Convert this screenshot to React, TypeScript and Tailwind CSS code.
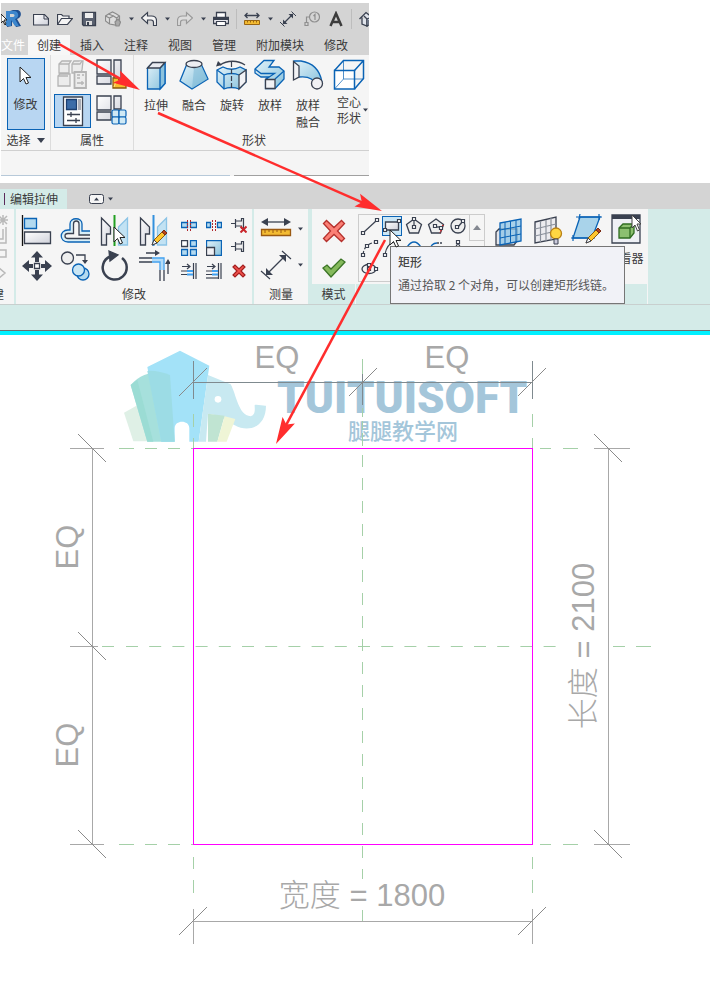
import { type FC, type ReactNode } from 'react'
import clsx from 'clsx'

const INK = '#3a4150'
const BLUE = '#0a63b5'
const GREY = '#a8a8a8'
const GREEN = '#a5d0a8'

type IconProps = { size?: number; width?: number; children: ReactNode }

const Icon: FC<IconProps> = ({ size = 32, width = size, children }) => (
  <svg
    width={width}
    height={size}
    viewBox={`0 0 ${width} ${size}`}
    fill="none"
    stroke={INK}
    strokeWidth="1.3"
    className="block shrink-0"
    aria-hidden="true"
  >
    {children}
  </svg>
)

const Gradients = () => (
  <svg width="0" height="0" className="absolute" aria-hidden="true">
    <defs>
      <linearGradient id="glass" x1="0" y1="0" x2="1" y2="1">
        <stop offset="0" stopColor="#e2f2f9" />
        <stop offset="1" stopColor="#86c1dc" />
      </linearGradient>
      <linearGradient id="steel" x1="0" y1="0" x2="1" y2="1">
        <stop offset="0" stopColor="#ffffff" />
        <stop offset="1" stopColor="#cfd1da" />
      </linearGradient>
    </defs>
  </svg>
)

const CursorShape: FC<{ x: number; y: number }> = ({ x, y }) => (
  <path
    transform={`translate(${x} ${y})`}
    d="M0 0v15l3.500-3.500 2.500 5.500 2.500-1-2.500-5.500h5z"
    fill="#fff"
    stroke="#222"
    strokeWidth="1"
  />
)

const Pencil: FC<{ x: number; y: number }> = ({ x, y }) => (
  <g transform={`translate(${x} ${y})`} strokeWidth="1">
    <path d="M0 15l2-5 8-8 3 3-8 8z" fill="#ffc62e" stroke="#8a5a10" />
    <path d="M10 2l2-2 3 3-2 2z" fill="#b5431d" stroke="#7a2c14" />
    <path d="M0 15l2-5 3 3z" fill="#fff" stroke={INK} />
  </g>
)

const Caret: FC<{ big?: boolean }> = ({ big }) => (
  <svg
    width={big ? 8 : 5}
    height={big ? 5 : 4}
    viewBox="0 0 8 5"
    className="block"
    aria-hidden="true"
  >
    <path d="M0 0h8L4 5z" fill={INK} />
  </svg>
)

/* Quick access toolbar */

const NewFile = () => (
  <Icon size={16}>
    <path d="M.5 3.500h11l4 4v6.500H.5z" fill="url(#steel)" stroke={INK} strokeWidth="1.200" />
    <path d="M11 3.500v4.500h4.500" strokeWidth="1" />
  </Icon>
)
const OpenFile = () => (
  <Icon size={16}>
    <path d="M.5 13.500v-10h4l1.500 1.500h6v2.500" strokeWidth="1.200" fill="#f4f4f4" />
    <path d="M.5 13.500l4-6h11l-5 6z" strokeWidth="1.200" fill="#f4f4f4" />
  </Icon>
)
const SaveFile = () => (
  <Icon size={16}>
    <path d="M1.500 1.500h13v13h-12l-1-1z" fill="#5a6170" />
    <path d="M4 2h8v5H4z" fill="#eee" stroke="none" />
    <path d="M5 10h6v4H5z" fill="#ddd" stroke="none" />
    <path d="M6 11h2v3H6z" fill={INK} stroke="none" />
  </Icon>
)
const SyncFile = () => (
  <Icon size={16}>
    <g stroke="#8b8b8b" strokeWidth="1.200">
      <path d="M.5 5l3-2 4-2 4 2 3 2v5l-4 4-6-1-4-3z" fill="#ddd" />
      <path d="M.5 5l4 2 4-2 3 2 3-2M4.500 7v6M3.500 3l5 2M11.500 7v5" />
      <path d="M10 11l3-3 2.500 3-1.500 4h-3z" fill="#aaa" />
    </g>
  </Icon>
)
const Undo: FC<{ muted?: boolean }> = ({ muted }) => (
  <Icon size={16}>
    <path
      d="M.5 7L6.500 1.500v3.500h4c3 0 5 2 5 4.500v5h-3V11.500c0-1.500-1-2.500-2.500-2.500H6.500v3.500z"
      transform={muted ? 'translate(16 0) scale(-1 1)' : undefined}
      fill={muted ? '#ddd' : '#f5f5f5'}
      stroke={muted ? '#999' : INK}
      strokeWidth="1.200"
    />
  </Icon>
)
const Print = () => (
  <Icon size={16}>
    <path d="M3.500 7V1.500h9V7" fill="#fff" />
    <path d="M.5 6.500h15v6H.5z" fill="#e8e8ee" />
    <path d="M3.500 10.500h9v4h-9z" fill="#fff" strokeWidth="1.200" />
    <path d="M1 8h14" strokeWidth="2" />
  </Icon>
)
const Ruler = () => (
  <Icon size={16}>
    <path d="M1 4.500h14M3.500 2L1 4.500 3.500 7M12.500 2L15 4.500 12.500 7" strokeWidth="1.300" />
    <path d="M.5 9.500h15v4H.5z" fill="#f3bb32" stroke="#9a6512" strokeWidth="1" />
    <path d="M3.500 10v1.500M6.500 10v1.500M9.500 10v1.500M12.500 10v1.500" stroke="#9a6512" strokeWidth="1" />
  </Icon>
)
const Aligned = () => (
  <Icon size={16}>
    <path d="M3 13L13 3" strokeWidth="1.200" />
    <path d="M3 8.500v4.500h4.500zM13 7.500V3H8.500z" fill={INK} stroke="none" />
    <path d="M0 11l4.500 4.500M11.500 .5L16 5" strokeWidth="1" />
  </Icon>
)
const Tag = () => (
  <Icon size={16}>
    <g stroke="#8f8f8f" strokeWidth="1.200">
      <circle cx="10.500" cy="6" r="5" />
      <path d="M5.500 6H2.500v6M1 11.500h3v3H1zM9.500 5l1.500-1.500V9" />
    </g>
  </Icon>
)
const TextNote = () => (
  <Icon size={16}>
    <path d="M2.500 15L8 2.500 13.500 15M4.500 11h7" stroke="#3c3c3c" strokeWidth="2.500" />
  </Icon>
)
const House = () => (
  <Icon size={16}>
    <path d="M.5 8L7 1.500 14 7M3 6.500V13l5 2V8L5 5" fill="#dfe3ea" />
    <path d="M8 8l5-2v6l-5 3zM10 9v4" fill="#b9c3d4" strokeWidth="1.200" />
  </Icon>
)

const QuickItem: FC<{ label: string; children: ReactNode }> = ({ label, children }) => (
  <button aria-label={label} className="flex w-6 shrink-0 justify-center">
    {children}
  </button>
)
const QuickCaret = () => (
  <button aria-label="更多" className="flex w-3 shrink-0 justify-center">
    <Caret />
  </button>
)
const QuickSeparator = () => (
  <span className="flex h-5 w-[7px] shrink-0 justify-center">
    <span className="w-px bg-[#bdbdbd]" />
  </span>
)

const QuickAccess = () => (
  <div className="flex h-8 items-center">
    <div className="w-7 shrink-0">
      <svg width="22" height="20" viewBox="0 0 22 20" className="block" aria-hidden="true">
        <path d="M6 3l6-2h5c4 1 4 8-1 9l4 7-5 1-4-7v6l-5 1z" fill="#1d4f91" />
        <path d="M5 2h8c5 0 6 7 1 8l4 7h-4l-4-6v6H5z" fill="#3d86cc" />
        <path d="M9 5h3c2 0 2 3 0 3H9z" fill="#d4d4d4" />
        <path d="M0 5v9l2-2 2 4 1-1-2-4h3z" fill="#fff" stroke="#222" strokeWidth="1" />
      </svg>
    </div>
    <QuickItem label="新建"><NewFile /></QuickItem>
    <QuickItem label="打开"><OpenFile /></QuickItem>
    <QuickItem label="保存"><SaveFile /></QuickItem>
    <QuickItem label="同步"><SyncFile /></QuickItem>
    <QuickCaret />
    <QuickItem label="放弃"><Undo /></QuickItem>
    <QuickCaret />
    <QuickItem label="重做"><Undo muted /></QuickItem>
    <QuickCaret />
    <QuickItem label="打印"><Print /></QuickItem>
    <QuickSeparator />
    <QuickItem label="测量"><Ruler /></QuickItem>
    <QuickCaret />
    <QuickItem label="对齐尺寸标注"><Aligned /></QuickItem>
    <QuickItem label="标记"><Tag /></QuickItem>
    <QuickItem label="文字"><TextNote /></QuickItem>
    <QuickSeparator />
    <QuickItem label="三维视图"><House /></QuickItem>
  </div>
)

/* Property panel icons */

const PasteGrey = () => (
  <Icon>
    <g stroke="#b4b4b4" fill="#ececec">
      <path d="M2 5l3-3h9l-2 3v9H2zM15 5l2-3h9l-1 9-2 3h-8zM1 17l2-2h10v12H1z" />
      <path d="M15 5h8l2-3M2 5h10M1 17h10" />
      <path d="M17.500 13h11.500v16H17.500z" strokeWidth="1.800" />
      <path d="M20 16h3M20 19h3M25 16h2M20 24h7M25 22v4" />
    </g>
  </Icon>
)
const FamilyTypes = () => (
  <Icon>
    <g fill="url(#steel)">
      <path d="M1 1h14v14H1zM18 1h7v21h-7zM1 17h14v8H1z" />
    </g>
    <path d="M17 29V19h5l1 2h7v8z" fill="#f7bd2d" stroke="#8a5a10" />
    <path d="M18 28l2-5h10" stroke="#ffe18a" strokeWidth="1" />
  </Icon>
)
const PropertySheet = () => (
  <Icon>
    <path d="M6.500 2h19v28.500h-19z" fill="#fff" />
    <path d="M9.500 4.500h10v10h-10z" fill="#3b6ca8" stroke="#1c3f70" />
    <path d="M21 4h3v11h-3z" fill="#a9adb7" stroke="none" />
    <path d="M10 19.500h13M10 25.500h13M14 17v5M19 23v5" />
  </Icon>
)
const FamilyCategory = () => (
  <Icon>
    <path d="M1 1h14v14H1zM18 1h7v13h-7zM1 17h14v8H1z" fill="url(#steel)" />
    <g fill="#cfe9f5" stroke={BLUE} strokeWidth="1.200">
      <rect x="16" y="15" width="7" height="7" rx="1.500" />
      <rect x="23" y="15" width="7" height="7" rx="1.500" />
      <rect x="16" y="22" width="7" height="7" rx="1.500" />
      <rect x="23" y="22" width="7" height="7" rx="1.500" />
    </g>
  </Icon>
)

/* Form icons */

const Extrusion = () => (
  <Icon>
    <path d="M7.500 9l5-5H25v20.500l-5 5.500H7.500z" fill="url(#glass)" stroke={BLUE} />
    <path d="M20 9l5-5v20.500l-5 5.500z" fill="#8cc2dd" stroke={BLUE} />
    <path d="M7.500 9l5-5.500H25L20 9z" fill="#e9ebf0" />
  </Icon>
)
const Blend = () => (
  <Icon>
    <path d="M8.500 6L2 22l12 8 16-10-6.500-14z" fill="url(#glass)" stroke={BLUE} />
    <path d="M16 9l-2 20.500L29.500 20 23 6z" fill="#78b5d4" stroke="none" opacity=".5" />
    <ellipse cx="16" cy="5" rx="8" ry="3.500" fill="#eceef2" />
  </Icon>
)
const Revolve = () => (
  <Icon>
    <path
      d="M1 11l6-3c5 3 12 3 17 0l6 3v12l-7 7c-4-2-11-2-15 0l-7-7z"
      fill="url(#glass)"
      stroke={BLUE}
    />
    <path d="M1 11l7 5v14" stroke={BLUE} />
    <path d="M8 16c4-2 11-2 15 0" stroke={BLUE} />
    <path d="M23 16l7-5v12l-7 7z" fill="#f1f2f5" />
    <path d="M4 6c7-5 18-5 25 0" />
    <path d="M0 7.500L2 2l4 4z" fill={INK} stroke="none" />
    <path d="M15.500 3v27" strokeWidth="1.200" strokeDasharray="5 2" />
  </Icon>
)
const Sweep = () => (
  <Icon>
    <path
      d="M1 10l9-8.500h10L15 8h10l5 4v8l-9 9.500h-9.500v-9l3-2.500H7l-6-4z"
      fill="url(#glass)"
      stroke={BLUE}
    />
    <path d="M1 10l6 4.500h13.500l-9 6M21 20l9-8" stroke={BLUE} />
    <path d="M11.500 20.500H21v9h-9.500z" fill="#f1f2f5" />
  </Icon>
)
const SweptBlend = () => (
  <Icon>
    <path d="M2 2h7c13 2 19 10 21 21l-6 3C22 20 16 17 7 18H2z" fill="url(#glass)" stroke={BLUE} />
    <path d="M1.500 2.500L7 7v11l-5.500 3z" fill="#f1f2f5" />
    <circle cx="25" cy="24.500" r="5.500" fill="#f1f1f4" />
  </Icon>
)
const VoidForms = () => (
  <Icon>
    <g stroke={BLUE} strokeWidth="1.500">
      <path d="M1.500 11.500h20V30h-20z" fill="#fff" />
      <path d="M1.500 11.500l9-10h20v18l-9 10.500M21.500 11.500l9-10" />
      <path d="M10.500 2v18h20M10.500 20l-9 10" strokeWidth="1" opacity=".7" />
    </g>
  </Icon>
)

const RibbonPanelLabel: FC<{ children: ReactNode }> = ({ children }) => (
  <div className="flex h-5 items-center justify-center">{children}</div>
)

const FormButton: FC<{ label: string[]; icon: ReactNode; wide?: boolean }> = ({
  label,
  icon,
  wide,
}) => (
  <button className={clsx('flex shrink-0 flex-col items-center', wide ? 'w-11' : 'w-[38px]')}>
    {icon}
    <span className={clsx('relative flex flex-col', wide ? 'pt-[3px] leading-4' : 'pt-[5px] leading-[17px]')}>
      {label.map((line) => (
        <span key={line}>{line}</span>
      ))}
      {wide && (
        <span className="absolute top-[17px] -right-[7px]">
          <Caret />
        </span>
      )}
    </span>
  </button>
)

const tabs = ['插入', '注释', '视图', '管理', '附加模块', '修改']

const FamilyRibbon = () => (
  <section className="mt-[3px] ml-px w-full max-w-[368px] overflow-hidden whitespace-nowrap">
    <div className="bg-[#d4d4d4]">
      <QuickAccess />
      <nav className="flex h-5 items-center">
        <a href="#" className="w-[27px] shrink-0 text-white">文件</a>
        <a href="#" className="flex h-full shrink-0 items-center bg-[#f7f7f7] px-[9px]">
          创建
        </a>
        {tabs.map((tab) => (
          <a key={tab} href="#" className="shrink-0 px-[10px]">
            {tab}
          </a>
        ))}
      </nav>
    </div>
    <div className="flex h-24 border-b border-[#d0d0d0] bg-[#f5f5f5]">
      <div className="flex w-[50px] shrink-0 flex-col items-center justify-between border-r border-[#dcdcdc] pt-[3px]">
        <button className="flex h-[72px] w-[38px] flex-col items-center border border-[#0a63b5] bg-[#b8d6f2] pt-1">
          <Icon>
            <CursorShape x={10} y={4} />
          </Icon>
          <span className="pt-[1px] leading-4">修改</span>
        </button>
        <button className="flex h-5 items-center gap-1.5">
          选择
          <Caret big />
        </button>
      </div>
      <div className="flex w-[83px] shrink-0 flex-col justify-between border-r border-[#dcdcdc] pt-1">
        <div className="grid grid-cols-2 gap-x-0.5 gap-y-[3px] px-[3px]">
          <button aria-label="粘贴" className="flex h-8 justify-center"><PasteGrey /></button>
          <button aria-label="族类型" className="flex h-8 justify-center"><FamilyTypes /></button>
          <button
            aria-label="属性选项板"
            className="flex h-[34px] items-center justify-center border border-[#0a63b5] bg-[#b8d6f2]"
          >
            <PropertySheet />
          </button>
          <button aria-label="族类别" className="flex h-[34px] items-center justify-center">
            <FamilyCategory />
          </button>
        </div>
        <RibbonPanelLabel>属性</RibbonPanelLabel>
      </div>
      <div className="flex grow flex-col justify-between pt-1 pl-[3px]">
        <div className="flex">
          <FormButton label={['拉伸']} icon={<Extrusion />} />
          <FormButton label={['融合']} icon={<Blend />} />
          <FormButton label={['旋转']} icon={<Revolve />} />
          <FormButton label={['放样']} icon={<Sweep />} />
          <FormButton label={['放样', '融合']} icon={<SweptBlend />} />
          <FormButton label={['空心', '形状']} icon={<VoidForms />} wide />
        </div>
        <RibbonPanelLabel>形状</RibbonPanelLabel>
      </div>
    </div>
    <div className="flex h-[25px] gap-1 bg-[#f5f5f5]">
      <div className="w-[229px] border-b border-[#b7c9d9]" />
      <div className="grow border-b border-[#a0a0a0]" />
    </div>
  </section>
)

/* Modify panel icons */

const Align = () => (
  <Icon>
    <path d="M1.500 0v31" stroke="#111" />
    <path d="M3.500 3.500h12v10h-12z" fill="#b3daf0" stroke={BLUE} />
    <path d="M3.500 17h26v11.500h-26z" fill="url(#steel)" />
  </Icon>
)
const Offset = () => (
  <Icon>
    <path d="M30 16h-8V9c0-7-12-7-12 0v6H8c-9 0-9 12 0 12h22" stroke={BLUE} fill="#d8eef7" />
    <path
      d="M30 20H19V9c0-4-5.500-4-5.500 0v9.500H8c-4 0-4 5 0 5h22"
      fill="#f5f5f5"
    />
  </Icon>
)
const MirrorPick = () => (
  <Icon>
    <path d="M2.500 3l9 9v7H7.500v11h-5z" fill="url(#steel)" />
    <path d="M28.500 3l-9 9v18h9z" fill="#c2e2f3" stroke="#8cc4e6" />
    <path d="M15.500 0v31" stroke="#22a022" strokeWidth="2" />
    <CursorShape x={15} y={12} />
  </Icon>
)
const MirrorDraw = () => (
  <Icon>
    <path d="M2.500 3l9 9v7H7.500v11h-5z" fill="url(#steel)" />
    <path d="M28.500 3l-9 9v18h9z" fill="#c2e2f3" stroke="#8cc4e6" />
    <path d="M15.500 0v31" stroke="#3390dd" strokeWidth="2" />
    <Pencil x={14} y={15} />
  </Icon>
)
const Move = () => (
  <Icon>
    <g fill={INK} stroke="none">
      <path d="M16 1l6 6.500h-4V12h-4V7.500h-4zM16 31l6-6.500h-4V20h-4v4.500h-4zM1 16l7-6v4h4v4H8v4zM31 16l-7-6v4h-4v4h4v4z" />
    </g>
    <path d="M13.500 13.500h5v5h-5z" fill="#fff" />
  </Icon>
)
const Copy = () => (
  <Icon>
    <circle cx="7.500" cy="8" r="6" fill="#eee" />
    <path d="M16 5h9v6" />
    <path d="M22 10h6l-3 4z" fill={INK} stroke="none" />
    <circle cx="23" cy="24" r="6" fill="#b3daf0" stroke={BLUE} />
    <circle cx="18.500" cy="20" r="6" fill="#c9e6f5" stroke={BLUE} />
  </Icon>
)
const Rotate = () => (
  <Icon>
    <path d="M11 6.500a12 12 0 1 0 12 1.500" strokeWidth="2.500" />
    <path d="M10 1l9 4-8 6z" fill={INK} />
  </Icon>
)
const TrimCorner = () => (
  <Icon>
    <path d="M1 8h13M1 12h13M22 20v11M26 20v11" />
    <path d="M14 10h10v10" stroke="#b4dcf8" strokeWidth="3" />
    <path d="M14 8h12v12M14 12h8v8" stroke="#3fa0f0" />
    <path d="M8 3h10M30 24V13" />
    <path d="M17 0l5 3-5 3zM27 14l3-5 3 5z" fill={INK} stroke="none" />
  </Icon>
)

const Split: FC<{ gap?: boolean }> = ({ gap }) => (
  <Icon size={16}>
    {gap ? (
      <path d="M.5 5.500h4v5h-4zM11.500 5.500h4v5h-4z" fill="#b3daf0" stroke={BLUE} />
    ) : (
      <path d="M.5 5.500h6v5h-6zM9.500 5.500h6v5h-6z" fill="#b3daf0" stroke={BLUE} />
    )}
    <path d="M6.500 3v11M9.500 3v11" stroke="#b0272d" strokeWidth="1" strokeDasharray="2 1" />
  </Icon>
)
const Pin: FC<{ unpin?: boolean }> = ({ unpin }) => (
  <Icon size={16}>
    <path d="M0 6.500h4.500M4.500 2v9M4.500 4h6V1.500h2v10h-2V9h-6" strokeWidth="1.200" fill="#eee" />
    {unpin && <path d="M9.500 9.500l6 6M15.500 9.500l-6 6" stroke="#c9252b" strokeWidth="2" />}
  </Icon>
)
const ArrayIcon = () => (
  <Icon size={16}>
    <path d="M.5 .5h6v6h-6z" fill="#fff" />
    <path d="M9.500 .5h6v6h-6zM.5 9.500h6v6h-6zM9.500 9.500h6v6h-6z" fill="#b3daf0" stroke={BLUE} />
  </Icon>
)
const Scale = () => (
  <Icon size={16}>
    <path d="M.5 .5h15v15H.5z" fill="url(#glass)" stroke={BLUE} />
    <path d="M.5 7.500h8v8h-8z" fill="#f1f1f4" />
  </Icon>
)
const Trim: FC<{ multi?: boolean }> = ({ multi }) => (
  <Icon size={16}>
    <path d="M12.500 0v16M15 0v16" strokeWidth="1.200" />
    <path d="M1 3.500h7M6 1l3 2.500L6 6" strokeWidth="1.200" />
    <path d="M0 8h6M0 11.500h6" strokeWidth="1.200" />
    <path d="M6 8h6M6 11.500h6" stroke="#3fa0f0" strokeWidth="1.800" />
    {multi && <path d="M0 15h12" strokeWidth="1.200" />}
  </Icon>
)
const Delete = () => (
  <Icon size={16}>
    <path
      d="M2 4l2-2 4 4 4-4 2 2-4 4 4 4-2 2-4-4-4 4-2-2 4-4z"
      fill="#f0524c"
      stroke="#a31f1f"
      strokeWidth="1.200"
    />
  </Icon>
)

const MeasureBetween = () => (
  <Icon>
    <path d="M4 9h24" />
    <path d="M1 9l7-4v8zM31 9l-7-4v8z" fill={INK} stroke="none" />
    <path d="M1.500 16.500h29v6h-29z" fill="#f3bb32" stroke="#9a5a12" />
    <path d="M5 17v3M9 17v2M13 17v3M17 17v2M21 17v3M25 17v2" stroke="#9a5a12" strokeWidth="1" />
  </Icon>
)
const MeasureAligned = () => (
  <Icon>
    <path d="M7 25L25 7" />
    <path d="M6 19v7h7zM26 13V6h-7z" fill={INK} stroke="none" />
    <path d="M1 22l9 8M22 2l9 8" strokeWidth="1.200" />
  </Icon>
)
const Cancel = () => (
  <Icon size={24}>
    <path
      d="M1.500 4.500l3-3 7.500 7 7.500-7 3 3-7 7.500 7 7.500-3 3-7.500-7-7.500 7-3-3 7-7.500z"
      fill="#fb8076"
      stroke="#b5302c"
    />
  </Icon>
)
const Finish = () => (
  <Icon size={24}>
    <path d="M1 13l4-3 4 4L19 4l4 3L9 22z" fill="#85b95c" stroke="#3c7526" />
  </Icon>
)

const IconButton: FC<{ label: string; children: ReactNode; caret?: boolean }> = ({
  label,
  children,
  caret,
}) => (
  <button aria-label={label} className="flex items-center justify-center gap-1.5">
    {children}
    {caret && <Caret />}
  </button>
)

/* Draw gallery icons, every cell is 20px */

const nodes = (points: [number, number][]) =>
  points.map(([x, y]) => (
    <path key={`${x}-${y}`} d={`M${x - 1.5} ${y - 1.5}h3v3h-3z`} fill="#fff" strokeWidth="1.200" />
  ))

const gallery: { label: string; icon: ReactNode; active?: boolean }[] = [
  { label: '线', icon: <><path d="M4 16L16 5" strokeWidth="1.200" />{nodes([[3, 17], [17, 4]])}</> },
  {
    label: '矩形',
    active: true,
    icon: <><path d="M3.500 6h13v8h-13z" fill="url(#steel)" />{nodes([[3, 14], [17, 5]])}</>,
  },
  {
    label: '内接多边形',
    icon: <><path d="M10 3l7.500 5.500-3 8.500h-9l-3-8.500z" fill="#eee" /><path d="M10 10V3" strokeWidth="1.200" />{nodes([[10, 11], [10, 3]])}</>,
  },
  {
    label: '外接多边形',
    icon: <><path d="M10 3l7.500 5.500-3 8.500h-9l-3-8.500z" fill="#eee" /><path d="M17 9l-3 8" stroke="#d22" strokeDasharray="3 1" /><path d="M11 11h4" />{nodes([[9, 10], [15, 12]])}</>,
  },
  {
    label: '圆形',
    icon: <><circle cx="10" cy="10" r="7" fill="#eee" /><path d="M10 11l5-6" />{nodes([[9, 11], [15, 5]])}</>,
  },
  {
    label: '起点-终点-半径弧',
    icon: <><path d="M3 17Q4 5 17 4" strokeDasharray="4 2" strokeWidth="1.200" />{nodes([[3, 17], [7, 8], [16, 4]])}</>,
  },
  { label: '圆心-端点弧', icon: <><path d="M3 16Q5 6 12 4" strokeWidth="1.200" />{nodes([[3, 17]])}</> },
  { label: '相切-端点弧', icon: <path d="M3 9Q10-1 17 9" stroke={BLUE} /> },
  { label: '圆角弧', icon: <><path d="M4 12Q5 5 11 5" stroke={BLUE} /><path d="M11 5h6" strokeDasharray="2 1" /></> },
  { label: '样条曲线', icon: <><path d="M6 12l4-7 4 7" strokeWidth="1.200" />{nodes([[10, 4]])}</> },
  { label: '椭圆', icon: <><ellipse cx="9" cy="9" rx="7" ry="4.500" />{nodes([[9, 9], [16, 9], [9, 5]])}</> },
]

const WorkPlane = () => (
  <Icon>
    <path d="M3 14l3-3h18v12l-3 4H3z" fill="#e3e5ea" />
    <path d="M7 5l21-4v22L7 27z" fill="#8ec5e6c0" stroke={BLUE} />
    <path d="M12 4v22M17.500 3v22M23 2v22M7 12l21-4M7 20l21-4" stroke={BLUE} strokeWidth="1" />
  </Icon>
)
const PlaneShow = () => (
  <Icon>
    <path d="M3 6l21-5v22L3 27z" fill="#ececf0" />
    <path d="M8.500 5v21M14 4v21M19 2v22M3 13l21-5M3 20l21-5" stroke="#8a909b" strokeWidth="1.200" />
    <circle cx="24" cy="17.500" r="5.500" fill="#ffd642" stroke="#b98015" />
    <path d="M22 23h4v5h-4z" fill="#ccd" strokeWidth="1" />
  </Icon>
)
const RefPlane = () => (
  <Icon>
    <path d="M9 3h20l-8 21H2z" fill="#a9d3ea" stroke={BLUE} />
    <path d="M5 3h26M0 24h24M9 0l-1 5M28 0v6M2 21v6" stroke={BLUE} strokeWidth="1.200" />
    <Pencil x={15} y={14} />
  </Icon>
)
const Viewer = () => (
  <Icon>
    <path d="M2 1h28v28H2z" fill="#eef0f5" />
    <path d="M2 3h28" strokeWidth="4" />
    <path d="M9 14l4-4h11v9l-4 5H9z" fill="#8cc070" stroke="#2f6c21" />
    <path d="M9 14h11v10M20 14l4-4" stroke="#2f6c21" />
    <g transform="translate(22 1)" stroke="#444" strokeWidth="1">
      <path d="M0 0v13l3-3 2.500 6 2-1L5 9h4z" fill="#fff" />
    </g>
  </Icon>
)

const DrawGallery = () => (
  <div className="relative flex h-[68px] w-[127px] shrink-0 overflow-hidden border border-[#cccccc]">
    <div className="grid grid-cols-5 content-start gap-x-0.5 gap-y-[2px] px-px pt-px">
      {gallery.map(({ label, icon, active }) => (
        <button
          key={label}
          aria-label={label}
          className={clsx(
            'h-5 w-5',
            active && 'bg-[#cbe6f5] outline -outline-offset-1 outline-[#0a63b5]',
          )}
        >
          <Icon size={20}>{icon}</Icon>
        </button>
      ))}
    </div>
    <button
      aria-label="向上滚动"
      className="flex h-[26px] grow items-center justify-center border-b border-l border-[#cccccc]"
    >
      <span className="rotate-180 opacity-60">
        <Caret big />
      </span>
    </button>
  </div>
)

const Tooltip = () => (
  <div
    role="tooltip"
    className="absolute top-[37px] left-[34px] h-[58px] w-[235px] border border-[#767676] bg-[#f1f2f7] pt-[7px] pl-[7px] text-[#575757]"
  >
    <p className="leading-4 font-medium text-[#444]">矩形</p>
    <p className="pt-[7px] leading-4">通过拾取 2 个对角，可以创建矩形线链。</p>
    <svg width="16" height="22" viewBox="0 0 16 22" className="absolute -top-[18px] -left-0.5" aria-hidden="true">
      <CursorShape x={1} y={1} />
    </svg>
  </div>
)

const EditRibbon = () => (
  <section className="mt-[7px] whitespace-nowrap">
    <div className="flex h-[26px] items-end bg-[#d4d4d4]">
      <a href="#" className="flex h-5 w-[67px] shrink-0 items-center gap-[5px] bg-[#d4ebe8] pl-1">
        <span className="h-3 w-px bg-[#5b2a5b]" />
        编辑拉伸
      </a>
      <button aria-label="最小化功能区" className="ml-[22px] flex h-5 items-center gap-1">
        <svg width="15" height="10" viewBox="0 0 15 10" aria-hidden="true">
          <rect x=".5" y=".5" width="14" height="9" rx="2" fill="#f5f5f5" stroke={INK} />
          <path d="M5 6.500L7.500 3.500 10 6.500z" fill={INK} />
        </svg>
        <Caret />
      </button>
    </div>
    <div className="flex h-24 border-b border-[#c8cfce] bg-[#d4ebe8]">
      <div className="flex w-3.5 shrink-0 flex-col justify-between overflow-hidden bg-[#f5f5f5]">
        <svg width="14" height="75" viewBox="0 0 14 75" fill="none" stroke="#b9b9b9" strokeWidth="1.500" aria-hidden="true">
          <path d="M3 6v10M-2 11H8M-1 7l8 8M7 7l-8 8M6 18v16H0M3 20v10H0M-2 41h8v7h-8M-2 58l7 6-7 6" />
        </svg>
        <span className="flex h-5 w-1 items-center justify-end">建</span>
      </div>
      <div className="ml-0.5 flex w-[236px] shrink-0 flex-col justify-between bg-[#f5f5f5]">
        <div className="flex gap-[3px] pt-1 pl-px">
          <div className="grid h-[70px] w-[156px] shrink-0 grid-cols-4">
            <IconButton label="对齐"><Align /></IconButton>
            <IconButton label="偏移"><Offset /></IconButton>
            <IconButton label="镜像 - 拾取轴"><MirrorPick /></IconButton>
            <IconButton label="镜像 - 绘制轴"><MirrorDraw /></IconButton>
            <IconButton label="移动"><Move /></IconButton>
            <IconButton label="复制"><Copy /></IconButton>
            <IconButton label="旋转"><Rotate /></IconButton>
            <IconButton label="修剪/延伸为角"><TrimCorner /></IconButton>
          </div>
          <div className="grid h-[70px] w-[75px] shrink-0 grid-cols-3">
            <IconButton label="拆分图元"><Split /></IconButton>
            <IconButton label="用间隙拆分"><Split gap /></IconButton>
            <IconButton label="解锁"><Pin unpin /></IconButton>
            <IconButton label="阵列"><ArrayIcon /></IconButton>
            <IconButton label="缩放"><Scale /></IconButton>
            <IconButton label="锁定"><Pin /></IconButton>
            <IconButton label="修剪/延伸单个图元"><Trim /></IconButton>
            <IconButton label="修剪/延伸多个图元"><Trim multi /></IconButton>
            <IconButton label="删除"><Delete /></IconButton>
          </div>
        </div>
        <RibbonPanelLabel>修改</RibbonPanelLabel>
      </div>
      <div className="ml-0.5 flex w-[54px] shrink-0 flex-col justify-between bg-[#f5f5f5]">
        <div className="flex flex-col gap-1 pt-1">
          <IconButton label="测量" caret><MeasureBetween /></IconButton>
          <IconButton label="对齐" caret><MeasureAligned /></IconButton>
        </div>
        <RibbonPanelLabel>测量</RibbonPanelLabel>
      </div>
      <div className="ml-1 flex w-11 shrink-0 flex-col justify-between border-r border-[#f5f5f5]">
        <div className="flex h-[75px] flex-col items-center justify-center gap-3 bg-[#f5f5f5] pt-1">
          <IconButton label="取消编辑模式"><Cancel /></IconButton>
          <IconButton label="完成编辑模式"><Finish /></IconButton>
        </div>
        <RibbonPanelLabel>模式</RibbonPanelLabel>
      </div>
      <div className="relative w-[292px] shrink-0 border-r border-[#f5f5f5]">
        <div className="flex h-[75px] items-start bg-[#f5f5f5] pt-[5px] pl-0.5">
          <DrawGallery />
          <div className="flex pl-1">
            <button aria-label="设置" className="flex w-[39px] justify-center pt-1"><WorkPlane /></button>
            <button aria-label="显示" className="flex w-[39px] justify-center pt-[2px]"><PlaneShow /></button>
            <button aria-label="参照平面" className="flex w-[39px] justify-center"><RefPlane /></button>
            <button className="flex w-[39px] flex-col items-center gap-1">
              <Viewer />
              <span className="leading-4">查看器</span>
            </button>
          </div>
        </div>
        <Tooltip />
      </div>
    </div>
    <div className="h-[25px] bg-[#d4ebe8]" />
    <div className="h-[5px] border-t border-[#6f6f6f] bg-[#00f0ff]" />
  </section>
)

/* Drawing area */

const Watermark = () => (
  <g>
    <g transform="translate(120 0) scale(.3333)">
      <path d="M12 233l68-38 22 124H40z" fill="#dff0e6" />
      <path d="M32 150c30-32 60-42 116-38l16 208H82z" fill="#a6e0dc" />
      <path d="M32 150l20-16 48 186H82z" fill="#9bdcd4" />
      <path d="M82 96l98-49 88 45-32 228h-28v-40c0-26-44-26-44 0v40h-40z" fill="#a3e2f8" />
      <path d="M82 108c22-2 46 4 68 12l14 200h-40z" fill="#9cdce5" />
      <path d="M264 120l68 28c18 32 22 92 60 96 16-4 12-24 12-34 10-2 30 4 34 2 0 52-34 76-76 66-48-18-42-34-98-42l-6 84h-22z" fill="#c8e9f1" />
      <path d="M264 236l50 6-22 78h-28z" fill="#c0e4d2" />
      <path d="M314 244l32 8-26 68h-28z" fill="#eff5d6" />
      <circle cx="294" cy="193" r="10" fill="#fff" />
    </g>
    <text x="277" y="78" fill="#a4c6da" fontFamily="Roboto, sans-serif" fontWeight="900" fontSize="44">
      TUITUISOFT
    </text>
    <text x="348" y="104" fill="#a4c6da" fontFamily='"Noto Sans CJK SC", sans-serif' fontWeight="500" fontSize="22">
      腿腿教学网
    </text>
  </g>
)

const Slash: FC<{ x: number; y: number; down?: boolean }> = ({ x, y, down }) => (
  <path d={down ? `M${x - 14} ${y - 14}l28 28` : `M${x - 14} ${y + 14}l28-28`} />
)

const Drawing = () => (
  <svg
    viewBox="0 0 710 659"
    className="block w-full max-w-[710px]"
    fill="none"
    role="img"
    aria-label="参照平面与矩形草图"
  >
    <Watermark />
    <g stroke={GREEN}>
      <path d="M119 113.500h15m11 0h12m11 0h12m11 0h3M532 113.500h1m7 0h11m12 0h15" />
      <path d="M119 509.500h15m11 0h12m11 0h12m11 0h3M532 509.500h1m7 0h11m12 0h15" />
      <path d="M102 311.500h12M613 311.500h12m11 0h15" />
      <path d="M126 311.500h430" strokeDasharray="12 11.200" />
      <path d="M193.500 79v13m0 11v10m0 409v12m0 11v13" />
      <path d="M532.500 79v13m0 11v10m0 409v12m0 11v13" />
      <path d="M362.500 24v15m0 34v9m0 4v9m0 3v13" />
      <path d="M362.500 120v424M362.500 575v23" strokeDasharray="12 11" />
    </g>
    <g stroke={GREY}>
      <path d="M193.500 47.500h339M193.500 26v38M362.500 39v31M532.500 26v38" stroke="#7f8a8f" />
      <path d="M193.500 586.500h339M193.500 574v35M532.500 574v35" />
      <path d="M92.500 113.500v396M70 113.500h34M70 311.500h28M70 509.500h34" />
      <path d="M608.500 113.500v396M594 113.500h36M594 509.500h36" />
      <g stroke="#8a8a8a">
        <Slash x={193} y={47} />
        <Slash x={363} y={47} />
        <Slash x={532} y={47} />
        <Slash x={193} y={586} />
        <Slash x={532} y={586} />
        <Slash x={92} y={113} down />
        <Slash x={92} y={311} down />
        <Slash x={92} y={509} down />
        <Slash x={608} y={113} down />
        <Slash x={608} y={509} down />
      </g>
    </g>
    <rect x="193.500" y="113.500" width="339" height="396" stroke="#ff00ff" />
    <g
      fill={GREY}
      fontFamily='"Liberation Sans", "Noto Sans CJK SC", sans-serif'
      fontSize="31"
      fontWeight="300"
      textAnchor="middle"
    >
      <text x="277" y="33">EQ</text>
      <text x="447" y="33">EQ</text>
      <text x="362" y="571">宽度 = 1800</text>
      <text transform="translate(78 212) rotate(-90)">EQ</text>
      <text transform="translate(78 410) rotate(-90)">EQ</text>
      <text transform="translate(594 311) rotate(-90)">长度 = 2100</text>
    </g>
  </svg>
)

/* Red guide arrows between the steps */

type ArrowProps = { from: [number, number]; to: [number, number] }

const Arrow: FC<ArrowProps> = ({ from: [x1, y1], to: [x2, y2] }) => {
  const length = Math.hypot(x2 - x1, y2 - y1)
  const angle = (Math.atan2(y2 - y1, x2 - x1) * 180) / Math.PI
  return (
    <g transform={`translate(${x1} ${y1}) rotate(${angle})`}>
      <path d={`M0 0H${length - 18}`} stroke="#ff2d2d" strokeWidth="2.500" />
      <path d={`M${length} 0l-27-7 5 7-5 7z`} fill="#ff2d2d" />
    </g>
  )
}

const GuideArrows = () => (
  <svg
    width="400"
    height="450"
    viewBox="0 0 400 450"
    className="pointer-events-none absolute top-0 left-0"
    aria-hidden="true"
  >
    <Arrow from={[59, 44]} to={[140, 90]} />
    <Arrow from={[158, 113]} to={[382, 211]} />
    <Arrow from={[385, 240]} to={[276, 444]} />
  </svg>
)

export default function App() {
  return (
    <main className="relative min-h-screen overflow-hidden bg-white font-['Noto_Sans_CJK_SC',sans-serif] text-xs text-[#3a3a3a]">
      <Gradients />
      <FamilyRibbon />
      <EditRibbon />
      <Drawing />
      <GuideArrows />
    </main>
  )
}
